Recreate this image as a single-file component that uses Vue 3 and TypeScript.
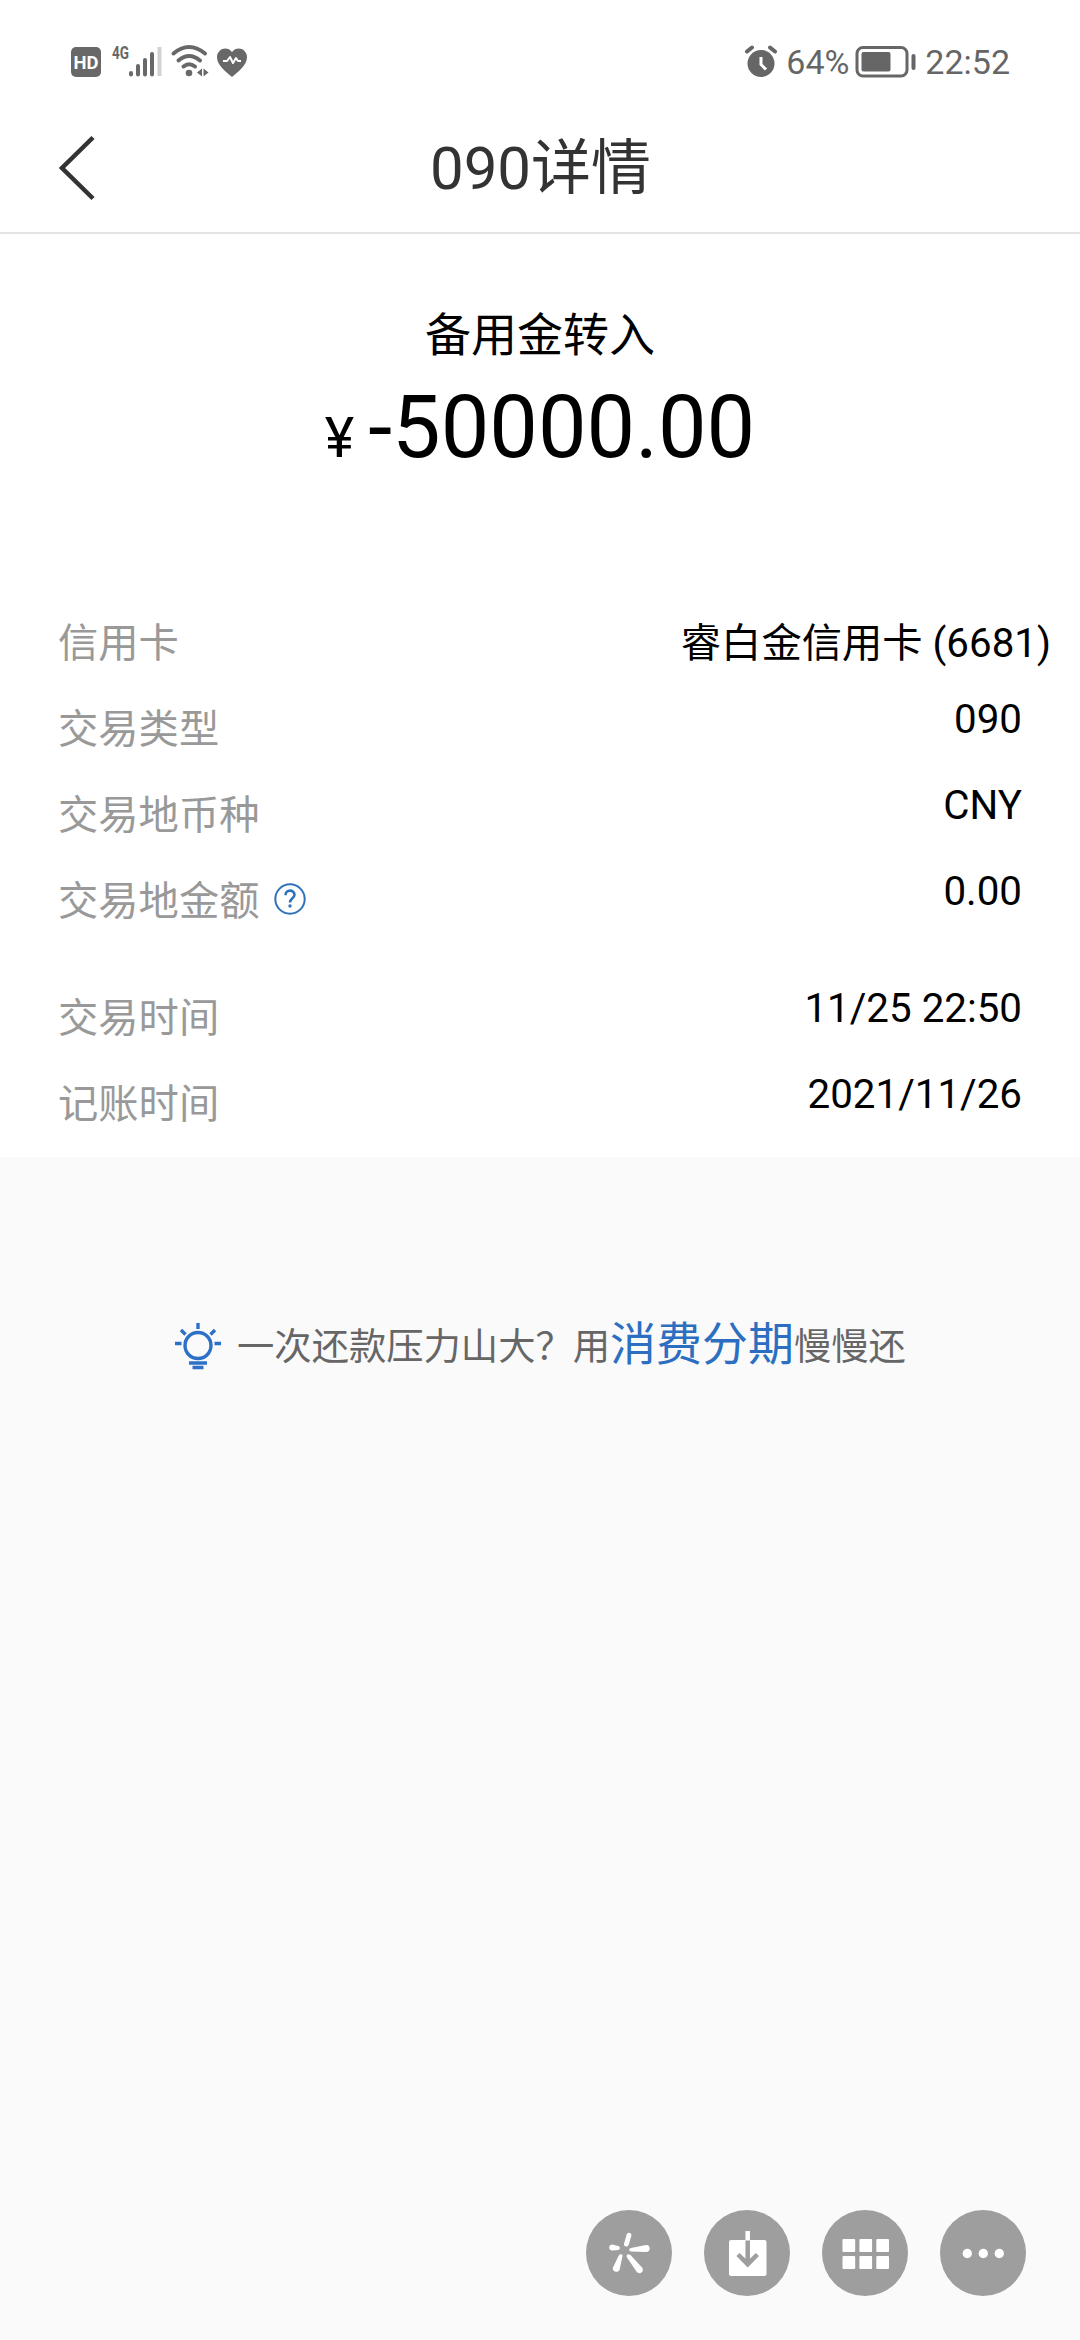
<script setup lang="ts">
interface DetailRow {
  label: string
  value: string
  help?: boolean
  wide?: boolean
}

const groups: DetailRow[][] = [
  [
    { label: '信用卡', value: '睿白金信用卡 (6681)', wide: true },
    { label: '交易类型', value: '090' },
    { label: '交易地币种', value: 'CNY' },
    { label: '交易地金额', value: '0.00', help: true },
  ],
  [
    { label: '交易时间', value: '11/25 22:50' },
    { label: '记账时间', value: '2021/11/26' },
  ],
]
</script>

<template>
  <div class="screen">
    <header class="status">
      <svg class="status-left" width="180" height="50" viewBox="0 -10 180 50">
        <rect x="1" y="2" width="30" height="30" rx="5" fill="#686868" />
        <text x="16" y="23.5" class="hd" text-anchor="middle" textLength="25" lengthAdjust="spacingAndGlyphs">HD</text>
        <text x="42" y="14" class="net" textLength="17" lengthAdjust="spacingAndGlyphs">4G</text>
        <g stroke="#686868" stroke-width="4" stroke-linecap="round">
          <path d="M61 28v1.6M68 21v8.6M75 15v14.6M82 9v20.6" />
          <path d="M89.500 2v29" stroke="#d2d2d2" stroke-linecap="butt" />
        </g>
        <g fill="none" stroke="#686868" stroke-width="4" stroke-linecap="round">
          <path d="M103.500 8.500Q119-4.500 135 8.500" />
          <path d="M108.500 15.500Q119 6.500 130 15.500" />
          <path d="M113.500 21.500Q119 17 125 21.500" />
        </g>
        <circle cx="119" cy="28" r="3.300" fill="#686868" />
        <path d="M132 23.500v8l-5-4zM133.500 23.500v8l5-4z" fill="#686868" />
        <path d="M162 32C155 26 147 20 147 12C147 4 157 0 162 7C167 0 177 4 177 12C177 20 169 26 162 32Z" fill="#686868" />
        <path d="M153 16h4l3-4 3 6 3-5 2 3h3" fill="none" stroke="#fff" stroke-width="2" stroke-linejoin="round" />
      </svg>
      <div class="status-right">
        <svg width="34" height="34" viewBox="0 0 34 34">
          <circle cx="17" cy="18.500" r="13.500" fill="#666" />
          <path d="M3 6.500l5-4M31 6.500l-5-4" stroke="#666" stroke-width="4" stroke-linecap="round" />
          <path d="M17 12v7.500l5 5" fill="none" stroke="#fff" stroke-width="3" />
        </svg>
        <span class="percent">64%</span>
        <svg class="battery" width="62" height="34" viewBox="0 0 62 34">
          <rect x="2" y="2.500" width="50" height="28.500" rx="6" fill="none" stroke="#666" stroke-width="3" />
          <rect x="6.500" y="7" width="29" height="19.500" rx="2" fill="#666" />
          <path d="M58.500 11v12" stroke="#666" stroke-width="4" stroke-linecap="round" />
        </svg>
        <span class="clock">22:52</span>
      </div>
    </header>

    <nav class="navbar">
      <svg class="back" width="40" height="66" viewBox="0 0 40 66">
        <path d="M35 2.500L4 33L35 63.500" fill="none" stroke="#333" stroke-width="4.500" />
      </svg>
      <h1>090详情</h1>
    </nav>

    <main class="panel">
      <div class="kind">备用金转入</div>
      <div class="amount"><span class="yen">¥</span><span>-50000.00</span></div>

      <section v-for="(group, i) in groups" :key="i" class="group">
        <div v-for="row in group" :key="row.label" class="row" :class="{ wide: row.wide }">
          <div class="label">
            <span>{{ row.label }}</span>
            <svg v-if="row.help" width="34" height="34" viewBox="0 0 34 34">
              <circle cx="17" cy="17" r="14.700" fill="none" stroke="#2f72b9" stroke-width="2" />
              <path d="M12.500 13.200C12.500 7.200 21.500 7.200 21.500 12.800C21.500 16.300 17 16.300 17 20.500" fill="none" stroke="#2f72b9" stroke-width="2.600" />
              <circle cx="17" cy="24" r="1.700" fill="#2f72b9" />
            </svg>
          </div>
          <div class="value">{{ row.value }}</div>
        </div>
      </section>
    </main>

    <section class="promo">
      <svg width="48" height="48" viewBox="0 0 48 48" fill="none" stroke="#2c70c8" stroke-width="3.400">
        <circle cx="24" cy="23.500" r="13" />
        <path d="M24 1v6M7 8l4.500 4.500M41 8l-4.500 4.500M1 21.500h6.500M40.500 21.500H47M15 41h18M18.500 45.500h11" />
      </svg>
      <p>一次还款压力山大？用<a>消费分期</a>慢慢还</p>
    </section>

    <footer class="tools">
      <svg viewBox="0 0 86 86">
        <circle cx="43" cy="43" r="43" />
        <g fill="#fff">
          <path d="M38 34L40.500 25C41.500 21.500 46 22.500 45.300 26L42.800 34.500C41.800 37.500 37.500 37 38 34Z" />
          <path d="M32 36L26.500 34.500C22 34.500 22 40.500 26.500 40.500L32 40C34.500 39.500 34.500 36.500 32 36Z" />
          <path d="M45 38L60 35C65 34.500 65 42.500 60 42L45 41.500C42.500 41 42.500 38.500 45 38Z" />
          <path d="M32.500 46L27 57.500C25.500 61.500 32 63.500 33.500 60L36.500 46C37 43.500 33.500 43.500 32.500 46Z" />
          <path d="M41 47.500L50.500 61.500C53.500 65.500 59 61.500 56 57.500L44.500 45C42 43 39.500 45 41 47.500Z" />
        </g>
      </svg>
      <svg viewBox="0 0 86 86">
        <circle cx="43" cy="43" r="43" />
        <rect x="25" y="30" width="37.500" height="36" rx="2" fill="#fff" />
        <path d="M43.700 21v9.500" stroke="#fff" stroke-width="4.500" />
        <path d="M43.700 30.500V53M34 44.500l9.700 9.700 9.700-9.700" fill="none" stroke="#9e9e9e" stroke-width="4.500" />
      </svg>
      <svg viewBox="0 0 86 86">
        <circle cx="43" cy="43" r="43" />
        <g fill="#fff">
          <rect v-for="n in 6" :key="n" :x="20.5 + ((n - 1) % 3) * 16.9" :y="n > 3 ? 46 : 29" width="12.700" height="13" rx="1" />
        </g>
      </svg>
      <svg viewBox="0 0 86 86">
        <circle cx="43" cy="43" r="43" />
        <g fill="#fff">
          <circle cx="27.300" cy="43.500" r="4.700" />
          <circle cx="43.300" cy="43.500" r="4.700" />
          <circle cx="59.300" cy="43.500" r="4.700" />
        </g>
      </svg>
    </footer>
  </div>
</template>

<style>
body {
  background: #fafafa;
}
</style>

<style scoped>
.screen {
  width: 1080px;
  height: 2340px;
  display: flex;
  flex-direction: column;
  background: #fafafa;
  font-family: Roboto, "Noto Sans CJK SC", sans-serif;
  color: #000;
  overflow: hidden;
}

.status {
  display: flex;
  justify-content: space-between;
  height: 104px;
  padding: 35px 70px 0 70px;
  box-sizing: border-box;
  background: #fff;
}

.status-left .hd {
  font-size: 18px;
  font-weight: 700;
  fill: #fff;
}

.status-left .net {
  font-size: 19px;
  font-weight: 700;
  fill: #686868;
}

.status-right {
  display: flex;
  align-items: flex-start;
  height: 34px;
  margin-top: 10px;
  font-size: 34px;
  line-height: 34px;
  color: #666;
}

.percent {
  margin-left: 8px;
  width: 62px;
}

.battery {
  margin-left: 7px;
}

.clock {
  margin-left: 8px;
}

.navbar {
  display: flex;
  align-items: center;
  height: 128px;
  padding: 0 57px 0 58px;
  background: #fff;
  border-bottom: 2px solid #e4e4e4;
}

.back {
  flex: none;
}

h1 {
  flex: 1;
  margin: 2px 40px 0 0;
  font-size: 60px;
  line-height: 80px;
  font-weight: 400;
  text-align: center;
  color: #333;
}

.panel {
  height: 923px;
  box-sizing: border-box;
  padding-top: 71px;
  background: #fff;
}

.kind {
  font-size: 46px;
  line-height: 60px;
  text-align: center;
}

.amount {
  display: flex;
  justify-content: center;
  align-items: baseline;
  height: 100px;
  margin: 13px 0 136px;
  font-size: 86.500px;
  line-height: 100px;
}

.yen {
  font-size: 56px;
  margin-right: 14px;
}

.group {
  padding: 0 58px;
}

.group + .group {
  padding-top: 31px;
}

.row {
  display: flex;
  justify-content: space-between;
  height: 86.100px;
  font-size: 40.300px;
  line-height: 60px;
}

.label {
  display: flex;
  color: #999;
}

.label svg {
  margin: 10px 0 0 14px;
}

.value {
  margin-top: -10px;
}

.wide .value {
  margin: 0 -29px 0 0;
}

.promo {
  display: flex;
  justify-content: center;
  align-items: center;
  margin-top: 157px;
}

.promo p {
  margin: 0 0 0 15px;
  font-size: 37.300px;
  line-height: 60px;
  color: #666;
}

.promo a {
  font-size: 46px;
  color: #2c6fc0;
}

.tools {
  display: flex;
  gap: 32px;
  margin: auto 54px 44px auto;
}

.tools svg {
  width: 86px;
  height: 86px;
  fill: #9e9e9e;
}
</style>
